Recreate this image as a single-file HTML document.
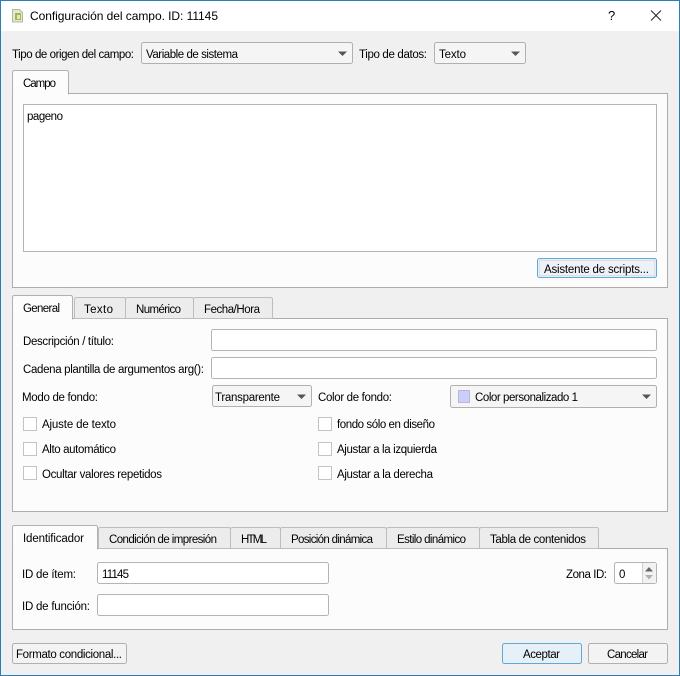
<!DOCTYPE html>
<html lang="es"><head><meta charset="utf-8"><title>Configuración del campo</title>
<style>
html,body{margin:0;padding:0;background:#f0f0f0;width:680px;height:676px;overflow:hidden}
svg{display:block}
text{font-family:"Liberation Sans",sans-serif;font-size:11.5px;fill:#000}
.p{fill:#fcfcfc;stroke:#adadad}
.i{fill:#fff;stroke:#b4b4b4}
.c{fill:#f5f5f5;stroke:#b0b0b0}
.b{fill:#f3f3f3;stroke:#b0b0b0}
.f{fill:#e6f0f8;stroke:#5fa8d8}
.t{fill:#ececec;stroke:#bdbdbd}
.a{fill:#fcfcfc;stroke:#b0b0b0}
.k{fill:#fff;stroke:#c4c4c4}
.r{fill:#555}
</style></head><body>
<svg width="680" height="676" viewBox="0 0 680 676" xmlns="http://www.w3.org/2000/svg">
<rect width="680" height="676" fill="#f0f0f0"/>
<rect x="0" y="0" width="680" height="31" fill="#fff"/>
<rect x="0.5" y="0.5" width="679" height="675" fill="none" stroke="#2b7db5"/>

<path d="M12.5 9.5h7l3 3v9.5h-10z" fill="#e2e6d2" stroke="#b3b8a0"/>
<rect x="15" y="13" width="6" height="7" fill="#9dbb4a"/>
<rect x="17" y="15" width="3" height="4" fill="#dfe8c0"/>
<text x="30" y="20" textLength="188" style="font-size:12px">Configuración del campo. ID: 11145</text>
<text x="608" y="20" style="font-size:13px">?</text>
<path d="M651 10.5l10 10M661 10.5l-10 10" stroke="#222" stroke-width="1" fill="none"/>

<text x="12" y="58" textLength="122">Tipo de origen del campo:</text>
<rect class="c" x="141.5" y="42.5" width="211" height="21" rx="2"/>
<text x="146" y="58" textLength="92">Variable de sistema</text>
<path class="r" d="M338 51.5h9l-4.500 4.500z"/>
<text x="359" y="58" textLength="68">Tipo de datos:</text>
<rect class="c" x="434.500" y="42.500" width="91" height="21" rx="2"/>
<text x="439" y="58" textLength="27">Texto</text>
<path class="r" d="M511 51.500h9l-4.500 4.500z"/>

<!-- panel 1 -->
<rect class="p" x="12.500" y="93.500" width="655" height="194"/>
<path class="a" d="M12.500 94v-21.500q0-2 2-2h52q2 0 2 2v21.500z"/>
<rect x="13" y="92" width="55" height="3" fill="#fcfcfc"/>
<text x="23" y="87" textLength="33">Campo</text>
<rect x="23.500" y="104.500" width="633" height="147" fill="#fff" stroke="#b4b4b4"/>
<text x="27" y="120" textLength="36">pageno</text>
<rect class="f" x="537.500" y="258.500" width="119" height="19" rx="2"/>
<rect x="539.500" y="260.500" width="115" height="15" fill="#eef2f6" stroke="#d8dfe6"/>
<text x="544" y="273" textLength="105">Asistente de scripts...</text>

<!-- panel 2 -->
<rect class="p" x="12.500" y="318.500" width="655" height="193"/>
<path class="t" d="M74.500 318.500v-19q0-2 2-2h47q2 0 2 2v19z"/>
<path class="t" d="M125.500 318.500v-19q0-2 2-2h64q2 0 2 2v19z"/>
<path class="t" d="M193.500 318.500v-19q0-2 2-2h75q2 0 2 2v19z"/>
<path class="a" d="M12.500 319v-21.500q0-2 2-2h56q2 0 2 2v21.500z"/>
<rect x="13" y="317" width="59" height="3" fill="#fcfcfc"/>
<text x="23" y="312" textLength="37">General</text>
<text x="84" y="313" textLength="29">Texto</text>
<text x="136" y="313" textLength="45">Numérico</text>
<text x="204" y="313" textLength="56">Fecha/Hora</text>

<text x="23" y="345" textLength="91">Descripción / título:</text>
<rect class="i" x="211.500" y="329.500" width="445" height="21" rx="2"/>
<text x="23" y="373" textLength="181">Cadena plantilla de argumentos arg():</text>
<rect class="i" x="211.500" y="357.500" width="445" height="21" rx="2"/>
<text x="22" y="401" textLength="76">Modo de fondo:</text>
<rect class="c" x="212.500" y="385.500" width="99" height="21" rx="2"/>
<text x="215" y="401" textLength="65">Transparente</text>
<path class="r" d="M297 394.500h9l-4.500 4.500z"/>
<text x="318" y="401" textLength="74">Color de fondo:</text>
<rect class="c" x="450.500" y="385.500" width="206" height="22" rx="2"/>
<rect x="458.500" y="390.500" width="11" height="12" fill="#ccccff" stroke="#b8b8d0"/>
<text x="475" y="401" textLength="103">Color personalizado 1</text>
<path class="r" d="M642 394.500h9l-4.500 4.500z"/>

<rect class="k" x="23.500" y="417.500" width="13" height="13"/>
<text x="42" y="428" textLength="74">Ajuste de texto</text>
<rect class="k" x="23.500" y="442.500" width="13" height="13"/>
<text x="42" y="453" textLength="74">Alto automático</text>
<rect class="k" x="23.500" y="466.500" width="13" height="13"/>
<text x="42" y="478" textLength="120">Ocultar valores repetidos</text>
<rect class="k" x="318.500" y="417.500" width="13" height="13"/>
<text x="337" y="428" textLength="98">fondo sólo en diseño</text>
<rect class="k" x="318.500" y="442.500" width="13" height="13"/>
<text x="337" y="453" textLength="100">Ajustar a la izquierda</text>
<rect class="k" x="318.500" y="466.500" width="13" height="13"/>
<text x="337" y="478" textLength="96">Ajustar a la derecha</text>

<!-- panel 3 -->
<rect class="p" x="12.500" y="548.500" width="655" height="81"/>
<path class="t" d="M98.500 548.500v-19q0-2 2-2h128q2 0 2 2v19z"/>
<path class="t" d="M230.500 548.500v-19q0-2 2-2h46q2 0 2 2v19z"/>
<path class="t" d="M280.500 548.500v-19q0-2 2-2h102q2 0 2 2v19z"/>
<path class="t" d="M386.500 548.500v-19q0-2 2-2h89q2 0 2 2v19z"/>
<path class="t" d="M479.500 548.500v-19q0-2 2-2h115q2 0 2 2v19z"/>
<path class="a" d="M12.500 549v-21.500q0-2 2-2h81q2 0 2 2v21.500z"/>
<rect x="13" y="547" width="84" height="3" fill="#fcfcfc"/>
<text x="23" y="542" textLength="61">Identificador</text>
<text x="109" y="543" textLength="108">Condición de impresión</text>
<text x="241" y="543" textLength="26">HTML</text>
<text x="291" y="543" textLength="82">Posición dinámica</text>
<text x="397" y="543" textLength="69">Estilo dinámico</text>
<text x="490" y="543" textLength="96">Tabla de contenidos</text>

<text x="22" y="578" textLength="54">ID de ítem:</text>
<rect class="i" x="97.500" y="562.500" width="231" height="21" rx="2"/>
<text x="102" y="578" textLength="27">11145</text>
<text x="22" y="610" textLength="68">ID de función:</text>
<rect class="i" x="97.500" y="594.500" width="231" height="21" rx="2"/>
<text x="566" y="578" textLength="41">Zona ID:</text>
<rect class="i" x="614.500" y="562.500" width="42" height="21" rx="2"/>
<text x="619" y="578" textLength="8">0</text>
<rect x="642" y="563" width="14" height="20" fill="#f2f2f2"/>
<path d="M642.500 563v20" stroke="#d0d0d0"/>
<path d="M645 571.500l4-4.500 4 4.500z" fill="#666"/>
<path d="M645 575h8l-4 4.500z" fill="#b0b0b0"/>

<!-- buttons -->
<rect class="b" x="12.500" y="643.500" width="114" height="20" rx="2"/>
<text x="16" y="658" textLength="106">Formato condicional...</text>
<rect class="f" x="502.500" y="643.500" width="79" height="20" rx="2"/>
<text x="523" y="658" textLength="37">Aceptar</text>
<rect class="b" x="588.500" y="643.500" width="79" height="20" rx="2"/>
<text x="607" y="658" textLength="41">Cancelar</text>
</svg>
</body></html>
